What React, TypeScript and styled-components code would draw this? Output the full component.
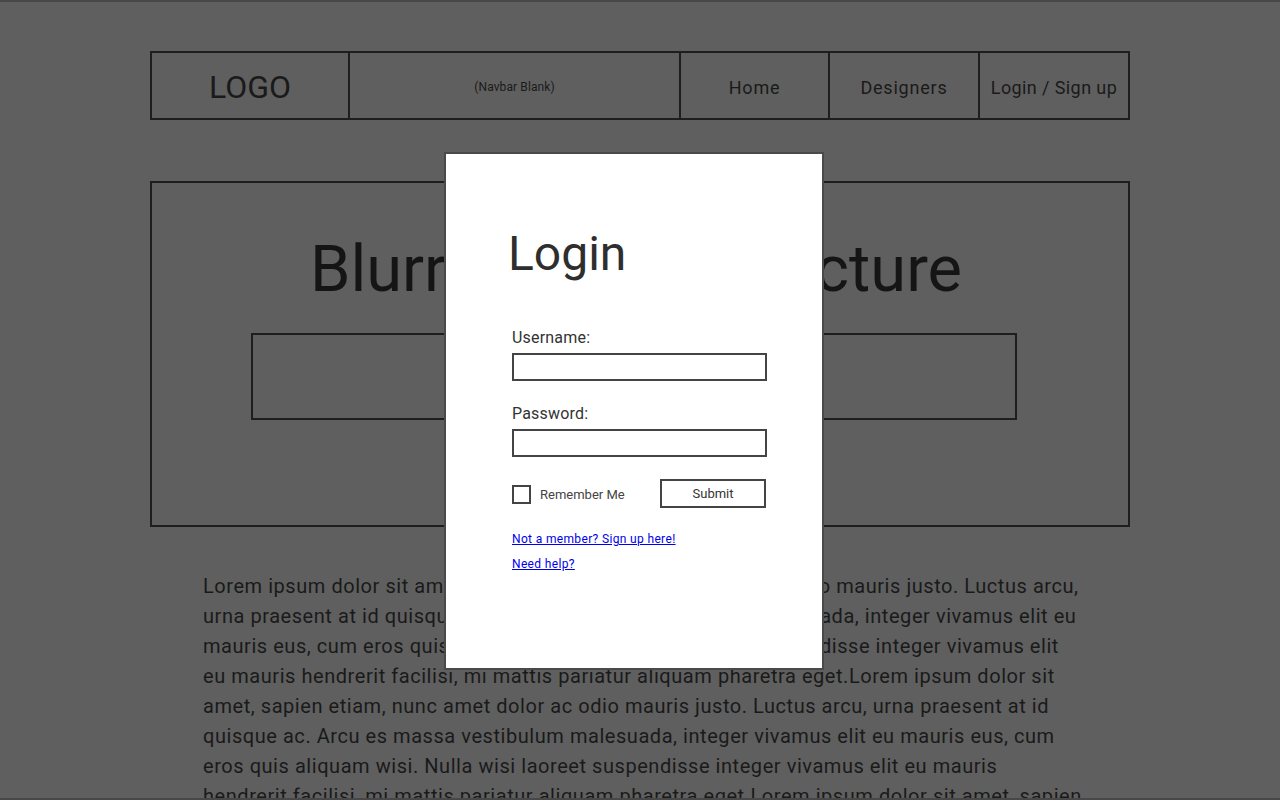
import React from 'react'
import styled, { createGlobalStyle } from 'styled-components'

const GlobalStyle = createGlobalStyle`
  html, body {
    margin: 0;
    padding: 0;
    background: #5f5f5f;
  }
  * {
    box-sizing: border-box;
  }
`

const line = '#1e1e1e'
const ink = '#1a1a1a'

const Page = styled.div`
  position: relative;
  height: 800px;
  overflow: hidden;
  background: #5f5f5f;
  border-top: 2px solid #474747;
  border-bottom: 2px solid #474747;
  font-family: Roboto, 'Liberation Sans', sans-serif;
  color: ${ink};
`

const Wrap = styled.div`
  width: 980px;
  margin: 0 auto;
  padding-top: 49px;
  display: flex;
  flex-direction: column;
`

const Navbar = styled.nav`
  display: flex;
  height: 69px;
  border: 2px solid ${line};
`

const NavCell = styled.div<{ $w: number; $size: number; $track?: number }>`
  width: ${(p) => p.$w}px;
  display: flex;
  align-items: center;
  justify-content: center;
  padding-top: 3px;
  font-size: ${(p) => p.$size}px;
  letter-spacing: ${(p) => p.$track ?? 0.8}px;
  white-space: nowrap;
  & + & {
    border-left: 2px solid ${line};
  }
`

const Hero = styled.section`
  margin-top: 61px;
  height: 346px;
  border: 2px solid ${line};
  display: flex;
  flex-direction: column;
  align-items: center;
`

const HeroTitle = styled.h1`
  margin: 46px 0 0;
  font-weight: 400;
  font-size: 65px;
  line-height: 80px;
  color: #151515;
  text-align: center;
  position: relative;
  left: -4px;
`

const HeroBox = styled.div`
  margin-top: 24px;
  margin-left: -12px;
  width: 766px;
  height: 87px;
  border: 2px solid ${line};
`

const Body = styled.p`
  margin: 44px 0 0 53px;
  width: 880px;
  font-size: 20px;
  line-height: 30px;
  letter-spacing: 0.55px;
`

const Modal = styled.div`
  position: absolute;
  left: 444px;
  top: 150px;
  width: 380px;
  height: 518px;
  background: #fff;
  border: 2px solid #4a4a4a;
  padding: 70px 56px 0 64px;
  display: flex;
  flex-direction: column;
  color: #333;
`

const ModalTitle = styled.h2`
  margin: 0 0 0 -2px;
  font-weight: 400;
  font-size: 48px;
  line-height: 60px;
  color: #2e2e2e;
`

const Field = styled.div<{ $top: number }>`
  display: flex;
  flex-direction: column;
  margin-top: ${(p) => p.$top}px;
  margin-left: 2px;
`

const Label = styled.label`
  font-size: 16px;
  line-height: 20px;
  margin-bottom: 5px;
  letter-spacing: 0.2px;
`

const Input = styled.input`
  width: 255px;
  height: 28px;
  border: 2px solid #444;
  margin: 0;
  padding: 0 4px;
  font-size: 14px;
  background: #fff;
  outline: none;
`

const ActionRow = styled.div`
  display: flex;
  align-items: center;
  margin-top: 22px;
  margin-left: 2px;
  width: 255px;
`

const Check = styled.span`
  width: 19px;
  height: 19px;
  border: 2px solid #444;
  flex: none;
  position: relative;
  top: 1px;
`

const CheckText = styled.span`
  margin-left: 9px;
  font-size: 13px;
  color: #444;
  flex: 1;
  position: relative;
  top: 1px;
`

const Submit = styled.button`
  width: 106px;
  height: 29px;
  border: 2px solid #444;
  background: #fff;
  font-family: Roboto, 'Liberation Sans', sans-serif;
  font-size: 13px;
  color: #333;
  padding: 0;
  margin-right: 1px;
`

const Links = styled.div`
  display: flex;
  flex-direction: column;
  gap: 8px;
  margin-top: 23px;
  margin-left: 2px;
`

const HelpLink = styled.a`
  align-self: flex-start;
  font-size: 12px;
  line-height: 17px;
  letter-spacing: 0.35px;
  color: #0000ee;
  text-decoration: underline;
`

const lorem =
  'Lorem ipsum dolor sit amet, sapien etiam, nunc amet dolor ac odio mauris justo. Luctus arcu, urna praesent at id quisque ac. Arcu es massa vestibulum malesuada, integer vivamus elit eu mauris eus, cum eros quis aliquam wisi. Nulla wisi laoreet suspendisse integer vivamus elit eu mauris hendrerit facilisi, mi mattis pariatur aliquam pharetra eget.'

const App = () => {
  return (
    <Page>
      <GlobalStyle />
      <Wrap>
        <Navbar>
          <NavCell $w={196} $size={32} $track={0}>LOGO</NavCell>
          <NavCell $w={331} $size={12} $track={0.1}>(Navbar Blank)</NavCell>
          <NavCell $w={149} $size={18}>Home</NavCell>
          <NavCell $w={150} $size={18}>Designers</NavCell>
          <NavCell $w={150} $size={18} $track={0.4}>Login / Sign up</NavCell>
        </Navbar>
        <Hero>
          <HeroTitle>Blurred Header Picture</HeroTitle>
          <HeroBox />
        </Hero>
        <Body>{lorem + lorem + lorem}</Body>
      </Wrap>
      <Modal>
        <ModalTitle>Login</ModalTitle>
        <Field $top={44}>
          <Label>Username:</Label>
          <Input type="text" />
        </Field>
        <Field $top={23}>
          <Label>Password:</Label>
          <Input type="password" />
        </Field>
        <ActionRow>
          <Check />
          <CheckText>Remember Me</CheckText>
          <Submit>Submit</Submit>
        </ActionRow>
        <Links>
          <HelpLink href="#">Not a member? Sign up here!</HelpLink>
          <HelpLink href="#">Need help?</HelpLink>
        </Links>
      </Modal>
    </Page>
  )
}

export default App
